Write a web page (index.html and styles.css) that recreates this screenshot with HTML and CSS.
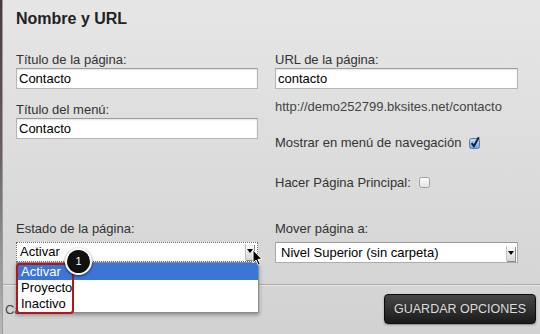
FILE: index.html
```html
<!DOCTYPE html>
<html lang="es">
<head>
    <meta charset="UTF-8">
    <title>Nombre y URL</title>
    <link rel="stylesheet" href="styles.css">
</head>
<body>
    <div class="dialog">
        <div class="main">
            <h2 class="title">Nombre y URL</h2>

            <div class="fields top">
                <div class="col">
                    <label class="lbl">Título de la página:</label>
                    <input class="txt" type="text" value="Contacto">
                    <label class="lbl next">Título del menú:</label>
                    <input class="txt" type="text" value="Contacto">
                </div>
                <div class="col">
                    <label class="lbl">URL de la página:</label>
                    <input class="txt" type="text" value="contacto">
                    <div class="url">http://demo252799.bksites.net/contacto</div>
                    <div class="check-row mostrar">
                        <span>Mostrar en menú de navegación</span>
                        <svg class="cb" width="13" height="13" viewBox="0 0 13 13">
                            <defs>
                                <linearGradient id="blue" x1="0" y1="0" x2="0" y2="1">
                                    <stop offset="0" stop-color="#c4dcf7"/>
                                    <stop offset="1" stop-color="#76a4e4"/>
                                </linearGradient>
                            </defs>
                            <rect x="1.5" y="2.5" width="10" height="10" rx="2" fill="url(#blue)" stroke="#5d7fae"/>
                            <path d="M3.6 7.2 L5.9 10.2 L10.8 1.2" fill="none" stroke="#15223d" stroke-width="2"/>
                        </svg>
                    </div>
                    <div class="check-row hacer">
                        <span>Hacer Página Principal:</span>
                        <svg class="cb" width="13" height="13" viewBox="0 0 13 13">
                            <defs>
                                <linearGradient id="white" x1="0" y1="0" x2="0" y2="1">
                                    <stop offset="0" stop-color="#ffffff"/>
                                    <stop offset="1" stop-color="#e2e2e2"/>
                                </linearGradient>
                            </defs>
                            <rect x="1.5" y="1.5" width="10" height="10" rx="2" fill="url(#white)" stroke="#a0a0a0"/>
                        </svg>
                    </div>
                </div>
            </div>

            <div class="fields bottom">
                <div class="col">
                    <label class="lbl">Estado de la página:</label>
                    <div class="select focused">
                        Activar
                        <span class="arrow"></span>
                        <ul class="dropdown">
                            <li class="selected">Activar</li>
                            <li>Proyecto</li>
                            <li>Inactivo</li>
                        </ul>
                        <span class="highlight"></span>
                        <span class="badge">1</span>
                        <svg class="cursor" width="12" height="18" viewBox="0 0 12 18">
                            <path d="M1 1 L1 14 L4 11 L6.3 16.2 L8.3 15.3 L6 10.3 L10 10.3 Z" fill="#000" stroke="#fff" stroke-width="1"/>
                        </svg>
                    </div>
                </div>
                <div class="col">
                    <label class="lbl">Mover página a:</label>
                    <div class="select">
                        Nivel Superior (sin carpeta)
                        <span class="arrow"></span>
                    </div>
                </div>
            </div>
        </div>

        <div class="footer">
            <!-- the open list covers all but the first letter -->
            <a class="cancel" href="#">Cancelar</a>
            <button class="save" type="button">GUARDAR OPCIONES</button>
        </div>
    </div>
</body>
</html>
```

FILE: styles.css
```css
* {
    box-sizing: border-box;
}
body {
    margin: 0;
    font-family: "Liberation Sans", Arial, sans-serif;
}
.dialog {
    position: relative;
    width: 540px;
    height: 334px;
    overflow: hidden;
    padding-left: 3px;
    background:
        linear-gradient(#4a3b3a, #6a5f5f 45%, #b9b9b9) left top / 2px 100% no-repeat,
        linear-gradient(#9c9c9c, #9c9c9c) 2px 0 / 1px 100% no-repeat,
        linear-gradient(#e6e6e6, #d2d2d2);
}
.main {
    padding: 9px 0 0 13px;
}
.title {
    margin: 0;
    font-size: 16px;
    line-height: 19px;
    font-weight: bold;
    color: #222;
}
.fields {
    display: grid;
    grid-template-columns: 242px 243px;
    column-gap: 17px;
}
.fields.top {
    margin-top: 24px;
}
.fields.bottom {
    margin-top: 31px;
}
.lbl {
    display: block;
    font-size: 13px;
    line-height: 15px;
    color: #333;
    margin-bottom: 1px;
}
.lbl.next {
    margin-top: 13px;
}
.bottom .lbl {
    margin-bottom: 6px;
}
.txt {
    display: block;
    width: 100%;
    height: 21px;
    margin: 0;
    padding: 0 2px;
    border: 1px solid #b6b6b6;
    border-top-color: #9c9c9c;
    box-shadow: inset 0 1px 2px rgba(0,0,0,0.12);
    background: #fff;
    font: 13px "Liberation Sans", Arial, sans-serif;
    color: #000;
    outline: none;
}
.url {
    margin-top: 10px;
    font-size: 13px;
    line-height: 15px;
    color: #444;
}
.check-row {
    display: flex;
    align-items: center;
    gap: 7px;
    font-size: 13px;
    line-height: 15px;
    color: #333;
}
.mostrar {
    margin-top: 21px;
}
.hacer {
    margin-top: 25px;
}
.cb {
    flex: none;
}
.select {
    position: relative;
    height: 21px;
    padding-left: 5px;
    border: 1px solid #ababab;
    border-top-color: #999;
    background: #fff;
    font-size: 13px;
    line-height: 19px;
    color: #000;
}
.select.focused {
    height: 20px;
    padding-left: 3px;
    border: 1px dotted #6e6e6e;
    line-height: 18px;
}
.arrow {
    position: absolute;
    right: 2px;
    top: 3px;
    width: 9px;
    height: 15px;
    background: linear-gradient(#fdfdfd, #d6d6d6);
    border-left: 1px solid #c2c2c2;
    box-shadow: 1px 1px 0 #8a8a8a;
}
.focused .arrow {
    top: 1px;
    right: 3px;
    height: 16px;
}
.arrow::after {
    content: "";
    position: absolute;
    left: 1px;
    top: 5px;
    border-left: 3px solid transparent;
    border-right: 3px solid transparent;
    border-top: 4px solid #000;
}
.dropdown {
    position: absolute;
    z-index: 2;
    left: -1px;
    top: 19px;
    width: 243px;
    height: 51px;
    margin: 0;
    padding: 0;
    list-style: none;
    background: #fff;
    border: 1px solid #8c8c8c;
    box-shadow: 0 2px 4px rgba(0,0,0,0.35);
}
.dropdown li {
    padding-left: 4px;
    line-height: 16px;
    font-size: 13px;
    color: #000;
}
.dropdown li.selected {
    padding-top: 1px;
    background: #3b76d7;
    color: #fff;
}
.highlight {
    position: absolute;
    z-index: 3;
    left: -1px;
    top: 20px;
    width: 58px;
    height: 51px;
    border: 2px solid #b3151d;
    border-radius: 4px;
}
.badge {
    position: absolute;
    z-index: 4;
    left: 48px;
    top: 5px;
    width: 27px;
    height: 27px;
    border: 2px solid #fff;
    border-radius: 50%;
    background: #111;
    box-shadow: 0 1px 3px rgba(0,0,0,0.6);
    color: #fff;
    font-size: 11px;
    line-height: 23px;
    text-align: center;
}
.cursor {
    position: absolute;
    z-index: 5;
    left: 235px;
    top: 6px;
}
.footer {
    display: flex;
    justify-content: space-between;
    align-items: center;
    margin-top: 21px;
    padding: 9px 4px 0 2px;
    border-top: 1px solid #aaa;
    box-shadow: inset 0 1px 0 #e8e8e8;
}
.cancel {
    font-size: 13px;
    line-height: 15px;
    color: #444;
    text-decoration: none;
}
.save {
    width: 152px;
    height: 30px;
    padding: 0;
    border: 1px solid #0c0c0c;
    border-radius: 4px;
    background: linear-gradient(#464646, #1b1b1b);
    box-shadow: 0 1px 2px rgba(0,0,0,0.35);
    color: #dcdcdc;
    font: 12.5px "Liberation Sans", Arial, sans-serif;
    cursor: pointer;
}
```
